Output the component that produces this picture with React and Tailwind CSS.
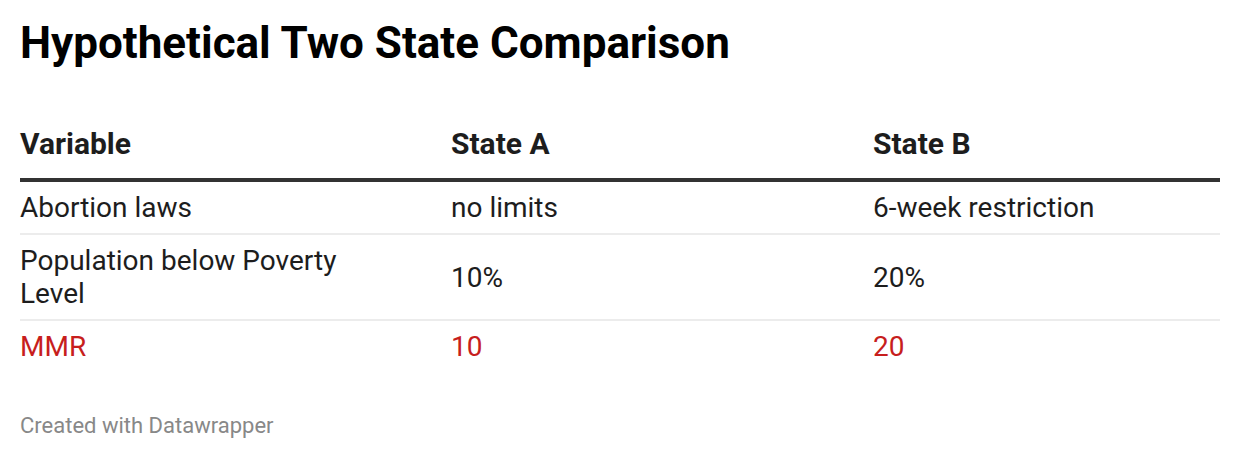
export default function App() {
  const rows = [
    { v: ["Abortion laws"], a: "no limits", b: "6-week restriction", red: false },
    { v: ["Population below Poverty", "Level"], a: "10%", b: "20%", red: false },
    { v: ["MMR"], a: "10", b: "20", red: true },
  ];
  return (
    <div className="w-[1240px] h-[460px] bg-white px-5 pt-[17px] text-[#1d1d1d]" style={{ fontFamily: "Roboto, 'Liberation Sans', sans-serif" }}>
      <h1 className="text-[44px] font-bold leading-[52px] text-black">Hypothetical Two State Comparison</h1>
      <div className="mt-[57px]">
        <div className="grid grid-cols-[431px_422px_1fr] border-b-4 border-[#333] pb-[16px] text-[30px] font-bold leading-[36px]">
          <div>Variable</div>
          <div>State A</div>
          <div>State B</div>
        </div>
        {rows.map((r, i) => (
          <div
            key={i}
            className={`grid grid-cols-[431px_422px_1fr] items-center text-[28px] leading-[33px] py-[9px] ${i < rows.length - 1 ? "border-b-2 border-[#ececec]" : ""} ${r.red ? "text-[#c71e1d]" : ""}`}
          >
            <div>{r.v.map((l, j) => <div key={j}>{l}</div>)}</div>
            <div>{r.a}</div>
            <div>{r.b}</div>
          </div>
        ))}
      </div>
      <div className="mt-[40px] text-[22px] leading-[28px] text-[#888]">Created with Datawrapper</div>
    </div>
  );
}
